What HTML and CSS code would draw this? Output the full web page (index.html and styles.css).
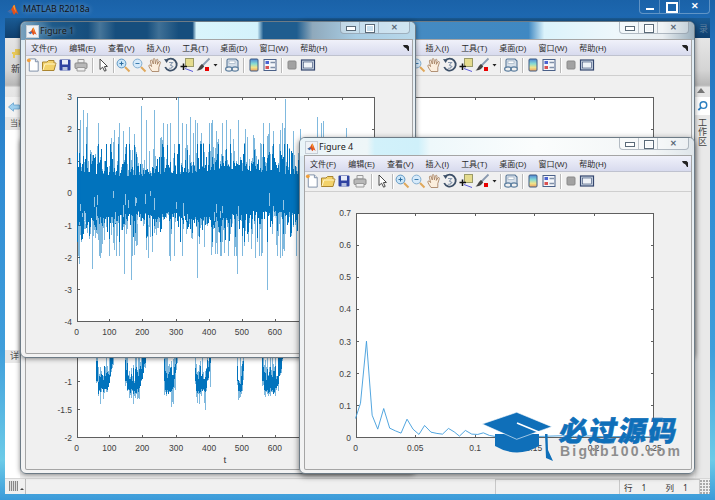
FILE: index.html
```html
<!DOCTYPE html>
<html lang="zh">
<head>
<meta charset="utf-8">
<title>MATLAB R2018a</title>
<link rel="stylesheet" href="styles.css">
</head>
<body>
<svg class="defs" aria-hidden="true">
  <defs>
    <linearGradient id="rainbow" x1="0" y1="0" x2="0" y2="1">
      <stop offset="0" stop-color="#4f86d8"/><stop offset=".4" stop-color="#86dcd4"/><stop offset=".7" stop-color="#f0e48a"/><stop offset="1" stop-color="#eea060"/>
    </linearGradient>
    <symbol id="i-new" viewBox="0 0 16 16"><path d="M3.5 1.5H10L13 4.5V14.5H3.5Z" fill="#fff" stroke="#7d8ea6"/><path d="M10 1.5V4.5H13" fill="#dfe6f0" stroke="#7d8ea6"/><circle cx="3" cy="3" r="2" fill="#ef9f3c"/></symbol>
    <symbol id="i-open" viewBox="0 0 16 16"><path d="M1.5 13.5V5H6L7.5 3.5H13V6H15L13 13.5Z" fill="#f3d26a" stroke="#aa8530"/><path d="M2 13L4 7H14.5" fill="none" stroke="#fff3c4"/></symbol>
    <symbol id="i-save" viewBox="0 0 16 16"><rect x="2.5" y="2.5" width="11" height="11" rx="1" fill="#2f42a0"/><rect x="5" y="3" width="6" height="4.5" fill="#e8ecf8"/><rect x="5.5" y="10" width="5" height="3.5" fill="#b8c2e0"/></symbol>
    <symbol id="i-print" viewBox="0 0 16 16"><path d="M5 2.5H11V6H5Z" fill="#eee" stroke="#9a9a9a"/><rect x="2" y="6" width="12" height="5.5" rx="1" fill="#b8b8b8" stroke="#8a8a8a"/><path d="M4 10.5H12V14H4Z" fill="#eee" stroke="#9a9a9a"/></symbol>
    <symbol id="i-cursor" viewBox="0 0 16 16"><path d="M5 2V12.5L7.6 10.2L9.6 14.2L11.2 13.4L9.4 9.6L12.4 9.4Z" fill="#fff" stroke="#333" stroke-width=".9"/></symbol>
    <symbol id="i-zin" viewBox="0 0 16 16"><path d="M10 10L14.5 14.5" stroke="#dfa85c" stroke-width="2"/><circle cx="6.5" cy="6.5" r="4.4" fill="#cbe6f8" stroke="#5f97c4"/><path d="M4.5 6.5H8.5M6.5 4.5V8.5" stroke="#2b6b9e"/></symbol>
    <symbol id="i-zout" viewBox="0 0 16 16"><path d="M10 10L14.5 14.5" stroke="#dfa85c" stroke-width="2"/><circle cx="6.5" cy="6.5" r="4.4" fill="#d6eafa" stroke="#82add0"/><path d="M4.5 6.5H8.5" stroke="#3d7dae"/></symbol>
    <symbol id="i-hand" viewBox="0 0 16 16"><path d="M5 14.5C3.8 12.5 1.6 9.8 1.8 8.6C2 7.6 3.6 8 4.6 9.6L3.4 4.2C3.2 2.9 4.8 2.6 5.2 3.8L6.3 7L6.2 2.6C6.2 1.2 7.9 1.2 8 2.6L8.4 6.8L9.4 3C9.8 1.8 11.2 2.2 11 3.5L10.3 7.4L11.9 4.9C12.6 4 13.8 4.7 13.3 5.8L11.8 10.5V14.5Z" fill="#fbeedd" stroke="#a07858" stroke-width=".8"/></symbol>
    <symbol id="i-rot" viewBox="0 0 16 16"><path d="M3 3.8A6 6 0 1 1 2.2 10" fill="none" stroke="#3d5068" stroke-width="1.8"/><path d="M1 2L5.8 2.4L3.6 6Z" fill="#3d5068"/><path d="M6 5.5H9.5L7.5 8L9.8 9.5L8 11.2H5.8" fill="none" stroke="#8a9bb0" stroke-width="1.1"/></symbol>
    <symbol id="i-tip" viewBox="0 0 16 16"><rect x="6.5" y="1.5" width="8" height="8" fill="#e5dc8e" stroke="#9a9a68"/><path d="M4.5 6.5V13M1.5 9.5H8" stroke="#111" stroke-width="1.5"/><path d="M6 11.5L14 14.5" stroke="#5a5ad8"/></symbol>
    <symbol id="i-brush" viewBox="0 0 16 16"><path d="M14.5 1.5L7.5 8.5" stroke="#8a9ab0" stroke-width="1.8"/><path d="M7 7L9.2 9.2C8 12 5 13.5 1.5 13.5C4 12 4 9 7 7Z" fill="#444"/><rect x="10" y="10" width="4" height="4" fill="#e80000"/></symbol>
    <symbol id="i-drop" viewBox="0 0 8 16"><path d="M2.5 7H6.5L4.5 9.5Z" fill="#222"/></symbol>
    <symbol id="i-link" viewBox="0 0 16 16"><path d="M3 11V3.5Q3 2 4.5 2H12L14 4V11" fill="#d7e0ea" stroke="#5a7898" stroke-width="1.1"/><rect x="5" y="4" width="6" height="2.6" fill="#fff" stroke="#8fa4b8" stroke-width=".6"/><ellipse cx="5" cy="12" rx="3.4" ry="2.2" fill="none" stroke="#5f80a0" stroke-width="1.2"/><ellipse cx="11" cy="12" rx="3.4" ry="2.2" fill="none" stroke="#5f80a0" stroke-width="1.2"/></symbol>
    <symbol id="i-cbar" viewBox="0 0 16 16"><rect x="4" y="2" width="8" height="12" rx="1" fill="url(#rainbow)" stroke="#3f5a82"/></symbol>
    <symbol id="i-leg" viewBox="0 0 16 16"><rect x="2" y="2.5" width="12" height="11" fill="#f4f6fa" stroke="#4a6088"/><rect x="3.5" y="4" width="3.5" height="3" fill="#4a62d0"/><rect x="3.5" y="9" width="3.5" height="3" fill="#d95050"/><path d="M8.5 5.5H13M8.5 10.5H13" stroke="#8090a8" stroke-width="1.3"/></symbol>
    <symbol id="i-hide" viewBox="0 0 16 16"><rect x="4" y="4" width="8" height="8" rx="1" fill="#a2a2a2" stroke="#8a8a8a"/></symbol>
    <symbol id="i-box" viewBox="0 0 16 16"><rect x="1.5" y="3" width="13" height="10" fill="#cbd6e4" stroke="#34466e" stroke-width="1.2"/><rect x="3.5" y="5" width="9" height="6" fill="#eef2f7" stroke="#34466e" stroke-width=".6"/></symbol>
    <symbol id="i-logo" viewBox="0 0 12 12"><path d="M0.5 7.5L4 5.5L6 2L7.5 0.8L11.5 10.5L9 8.5L7 11L5 7.8Z" fill="#e2501c"/><path d="M0.5 7.5L4 5.5L5.6 7.5L3.4 9.8Z" fill="#3d6fb0"/><path d="M6 2L7.5 0.8L9 8.5L7 5Z" fill="#f2a030"/></symbol>
  </defs>
</svg>

<template id="chrome">
  <nav class="menu">
    <span>文件(F)</span><span>编辑(E)</span><span>查看(V)</span><span>插入(I)</span><span>工具(T)</span><span>桌面(D)</span><span>窗口(W)</span><span>帮助(H)</span>
    <svg class="menu-arrow" viewBox="0 0 8 8"><path d="M1 1H5.5L7 2.5V7H6L4.5 4.5L2 3Z" fill="#222"/></svg>
  </nav>
  <div class="tools">
    <svg class="tool first"><use href="#i-new"/></svg>
    <svg class="tool"><use href="#i-open"/></svg>
    <svg class="tool"><use href="#i-save"/></svg>
    <svg class="tool"><use href="#i-print"/></svg>
    <i class="sep"></i>
    <svg class="tool"><use href="#i-cursor"/></svg>
    <i class="sep sep-b"></i>
    <svg class="tool"><use href="#i-zin"/></svg>
    <svg class="tool"><use href="#i-zout"/></svg>
    <svg class="tool"><use href="#i-hand"/></svg>
    <svg class="tool"><use href="#i-rot"/></svg>
    <svg class="tool"><use href="#i-tip"/></svg>
    <svg class="tool"><use href="#i-brush"/></svg>
    <svg class="tool narrow"><use href="#i-drop"/></svg>
    <i class="sep sep-c"></i>
    <svg class="tool"><use href="#i-link"/></svg>
    <i class="sep"></i>
    <svg class="tool"><use href="#i-cbar"/></svg>
    <svg class="tool"><use href="#i-leg"/></svg>
    <i class="sep"></i>
    <svg class="tool"><use href="#i-hide"/></svg>
    <svg class="tool"><use href="#i-box"/></svg>
  </div>
</template>

<div class="app">
  <header class="app-title">
    <svg class="app-logo"><use href="#i-logo"/></svg>
    <span class="app-name">MATLAB R2018a</span>
    <div class="app-btns">
      <span class="btn-min"></span>
      <span class="btn-max"></span>
      <span class="btn-close">&#x2715;</span>
    </div>
  </header>
  <div class="client">
    <div class="tabs"><span class="tabs-end">录</span></div>
    <div class="ribbon">
      <div class="ribbon-new">
        <svg class="plus" viewBox="0 0 8 10"><path d="M3 1H8V4H8V7H3V10H1V6H0V4H3Z" fill="#e8c95a"/></svg>
        <span>新</span>
      </div>
      <span class="collapse"></span>
    </div>
    <div class="work">
      <div class="left">
        <div class="nav">
          <svg class="back" viewBox="0 0 12 10"><path d="M0.5 5L5.5 0.8V3H11.5V7H5.5V9.2Z" fill="#9fd0ef" stroke="#5c9ccc" stroke-width=".7"/></svg>
        </div>
        <div class="path">当前</div>
        <div class="pane pane-top"></div>
        <div class="detail">详</div>
        <div class="pane"></div>
      </div>
      <div class="side">
        <svg class="find" viewBox="0 0 12 12"><circle cx="7" cy="5" r="3.6" fill="#fff" stroke="#2c7fc0" stroke-width="1.6"/><path d="M4.4 7.6L1.5 10.5" stroke="#2c7fc0" stroke-width="2"/></svg>
        <span class="side-tab">工作区</span>
      </div>
    </div>
    <footer class="status">
      <span class="grip"></span><span class="grip-arrow"></span>
      <span class="status-fill"></span>
      <span class="status-cell"></span>
      <span class="status-pos"><b>行</b><b>1</b><b class="pos-col">列</b><b>1</b></span>
      <span class="status-resize"></span>
    </footer>
  </div>
</div>

<section class="fig f3" data-plot="3"><div class="fig-title"><svg class="fig-icon"><use href="#i-logo"/></svg><span class="fig-name">Figure 3</span><div class="fig-btns"><span class="btn-min"></span><span class="btn-max"></span><span class="btn-close">&#x2715;</span></div></div><div class="fig-client"></div></section>
<section class="fig f2" data-plot="2"><div class="fig-title"><svg class="fig-icon"><use href="#i-logo"/></svg><span class="fig-name">Figure 2</span><div class="fig-btns"><span class="btn-min"></span><span class="btn-max"></span><span class="btn-close">&#x2715;</span></div></div><div class="fig-client"></div></section>
<section class="fig f1" data-plot="1"><div class="fig-title"><svg class="fig-icon"><use href="#i-logo"/></svg><span class="fig-name">Figure 1</span><div class="fig-btns"><span class="btn-min"></span><span class="btn-max"></span><span class="btn-close">&#x2715;</span></div></div><div class="fig-client"></div></section>
<section class="fig f4" data-plot="4"><div class="fig-title"><svg class="fig-icon"><use href="#i-logo"/></svg><span class="fig-name">Figure 4</span><div class="fig-btns"><span class="btn-min"></span><span class="btn-max"></span><span class="btn-close">&#x2715;</span></div></div><div class="fig-client"></div></section>

<div class="mark">
  <svg class="mark-cap" viewBox="0 0 72 50">
    <path d="M13 22V34Q35 47 57 34V22Z" fill="#0f6fb9"/>
    <path d="M0.3 12L34.7 0.3L69.7 14.7L34.7 27.3Z" fill="#0f6fb9" stroke="#fff" stroke-width=".6"/>
    <path d="M35 11L64 23" stroke="#fff" stroke-width="1.6"/>
    <path d="M63 22L64 46L71 49L66 38L65.5 22Z" fill="#0f6fb9"/>
  </svg>
  <div class="mark-text">
    <strong>必过源码</strong>
    <em>Bigdb100.com</em>
  </div>
</div>

<script src="script.js"></script>
</body>
</html>
```

FILE: styles.css
```css
* { box-sizing: border-box; }
html, body { margin: 0; width: 715px; height: 500px; overflow: hidden; }
body { position: relative; font-family: "Noto Sans", "Noto Sans CJK SC", sans-serif; color: #222; }
.defs { position: absolute; width: 0; height: 0; }

.app { width: 715px; height: 500px; display: flex; flex-direction: column; padding: 0 5px 6px;
  background: linear-gradient(180deg, #1a62a8 0, #2270bb 8%, #2f8bd3 35%, #3f9edb 70%, #6ccbe8 92%, #3b9ad9 100%); }
.app-title { height: 18px; display: flex; align-items: flex-start; margin: 0 0 0 -1px; }
.app-logo { width: 12px; height: 12px; margin: 4px 3px 0 3px; }
.app-name { font-size: 8.8px; line-height: 19px; color: #111; text-shadow: 0 0 5px rgba(255,255,255,.55); margin-left: 1px; }
.app-btns { margin-left: auto; margin-right: 0; width: 71px; height: 14px; display: flex; border: 1px solid rgba(255,255,255,.3); border-top: 0; border-radius: 0 0 4px 4px; color: #fff; }
.app-btns span { position: relative; display: block; border-right: 1px solid rgba(255,255,255,.25); height: 13px; font-size: 9px; line-height: 11px; text-align: center; font-weight: 700; }
.app-btns .btn-min { width: 20px; }
.app-btns .btn-max { width: 20px; }
.app-btns .btn-close { flex: 1; border-right: 0; }
.btn-min::before { content: ""; position: absolute; left: 6px; bottom: 3px; width: 8px; height: 2px; background: currentColor; }
.btn-max::before { content: ""; position: absolute; left: 6px; top: 2px; width: 8px; height: 7px; border: 2px solid currentColor; border-top-width: 2px; }

.client { flex: 1; min-height: 0; display: flex; flex-direction: column; background: #f0f0f0; }
.tabs { height: 20px; display: flex; justify-content: flex-end; align-items: center; padding-right: 2px; background: linear-gradient(180deg, #1a5b94, #0f3f6e); }
.tabs-end { color: #5d7f9e; font-size: 9px; }
.ribbon { height: 59px; display: flex; justify-content: space-between; background: linear-gradient(180deg, #e6e6e6 0, #d4d4d4 55%, #b7b7b7 80%, #e8e8e8 84%, #e4e4e4 100%); }
.ribbon-new { display: flex; flex-direction: column; align-items: flex-end; width: 15px; font-size: 9px; line-height: 11px; color: #333; padding-top: 10px; }
.plus { width: 8px; height: 10px; margin-bottom: 5px; }
.collapse { align-self: flex-end; margin: 0 5px 4px 0; width: 0; height: 0; border: 4px solid transparent; border-top: 0; border-bottom: 5px solid #777; }
.work { flex: 1; min-height: 0; display: flex; justify-content: space-between; background: #f0f0f0; }
.left { width: 15px; display: flex; flex-direction: column; }
.nav { height: 20px; display: flex; align-items: center; padding-left: 3px; background: #f2f2f2; }
.back { width: 12px; height: 10px; }
.path { height: 13px; font-size: 8px; line-height: 12px; padding-left: 5px; color: #444; background: #e6e6e6; white-space: nowrap; }
.pane { flex: 1; background: #fff; }
.pane-top { flex: none; height: 220px; }
.detail { height: 13px; font-size: 9px; line-height: 12px; padding-left: 5px; color: #555; background: #e8e8e8; }
.side { width: 15px; display: flex; flex-direction: column; align-items: center; background: #e9e9e9; }
.find { width: 15px; height: 18px; padding: 3px 2px; background: #fff; }
.side-tab { margin-top: 3px; writing-mode: vertical-rl; font-size: 9px; color: #444; line-height: 13px; letter-spacing: .5px; }
.status { height: 16px; display: flex; align-items: stretch; background: #f0f0f0; border-top: 1px solid #d6d6d6; }
.grip { width: 9px; margin: 2px 0 3px 4px; background: repeating-linear-gradient(90deg, #888 0 1px, #ddd 1px 2px); }
.grip-arrow { width: 0; height: 0; margin: 9px 1px 0 2px; border: 2px solid transparent; border-top: 0; border-bottom: 2px solid #444; }
.status-fill { flex: 1; border-left: 1px solid #bbb; }
.status-cell { width: 125px; border: 1px solid #c8c8c8; border-bottom: 0; }
.status-pos { width: 80px; display: flex; align-items: center; gap: 9px; padding-left: 4px; border-top: 1px solid #c8c8c8; border-right: 1px solid #c8c8c8; font-size: 8.5px; color: #333; }
.status-pos b { font-weight: 400; }
.status-pos .pos-col { margin-left: 10px; }
.status-resize { width: 10px; background: radial-gradient(circle at 1px 1px, #aaa 0 1px, transparent 1px) 0 4px / 3px 3px; }

.fig { position: absolute; width: 396px; height: 337px; padding: 0 3px 4px 5px; display: flex; flex-direction: column;
  border: 1px solid #6d7b86; border-radius: 6px; background: linear-gradient(180deg, #dcebf4, #eef1f3 40%, #f3f3f3); box-shadow: 0 1px 5px rgba(0,0,0,.45); }
.f1 { left: 20px; top: 21px; }
.f2 { left: 20px; top: 137px; }
.f3 { left: 299px; top: 21px; }
.f4 { left: 299px; top: 137px; box-shadow: 0 2px 6px rgba(0,0,0,.55); }
.fig-title { flex: none; height: 18px; margin: 0 -3px 0 -5px; padding: 0 5px; display: flex; align-items: flex-start; border-radius: 5px 5px 0 0; }
.f1 .fig-title { background: linear-gradient(90deg, #7ba2bd 0, #5d8fb2 3%, #1e5a8a 8%, #164e7d 17%, #47769a 20%, #164e7d 24%, #164e7d 32%, #3f7096 35%, #164e7d 40%, #164e7d 43.5%, #d9f5fc 44.5%, #d4f2fb 60%, #1f5d8f 61.5%, #1f5d8f 70%, #8fa9bc 74%, #a9cde4 85%, #b9d8ea 100%); }
.f3 .fig-title { background: linear-gradient(90deg, #4a8dc2 0, #3f88c2 58%, #dbf3fb 62%, #eef7fb 80%, #e9eef1 92%, #9cb0be 100%); }
.f4 .fig-title { background: linear-gradient(90deg, #e9f4f8 0, #eef6f8 17%, #d2f1fa 19%, #cff0fa 30%, #eef8fb 33%, #fbfdfd 60%, #f2f5f6 90%, #dfe6ea 100%); }
.fig-icon { width: 11px; height: 11px; margin: 4px 2px 0 1px; padding: 1px; background: #eef2f6; box-shadow: 0 0 0 1px #c6ced6; }
.fig-name { font-size: 9px; line-height: 18px; color: #1a1a1a; text-shadow: 0 0 4px rgba(255,255,255,.7); }
.fig-btns { margin-left: auto; width: 70px; height: 12px; display: flex; color: #5a6a78; border: 1px solid rgba(110,125,140,.5); border-top: 0; border-radius: 0 0 4px 4px; background: rgba(255,255,255,.35); }
.fig-btns span { position: relative; display: block; height: 11px; border-right: 1px solid rgba(110,125,140,.4); font-size: 8px; line-height: 10px; text-align: center; font-weight: 700; }
.fig-btns .btn-min { width: 19px; }
.fig-btns .btn-max { width: 19px; }
.fig-btns .btn-close { flex: 1; border-right: 0; }
.fig-btns .btn-min::before { left: 5px; bottom: 2px; width: 8px; height: 3px; background: #fff; border: 1px solid currentColor; }
.fig-btns .btn-max::before { left: 5px; top: 2px; width: 8px; height: 7px; border: 1px solid currentColor; box-shadow: inset 0 0 0 1px #fff; }

.fig-client { flex: 1; min-height: 0; display: flex; flex-direction: column; background: #f0f0f0; box-shadow: 0 0 0 1px #a5a5a5; border-radius: 0 0 1px 1px; overflow: hidden; }
.menu { flex: none; height: 16px; position: relative; display: flex; align-items: center; gap: 12px; padding-left: 5px; background: linear-gradient(180deg, #f0f1fa, #d8dbee); border-bottom: 1px solid #bfc2cf; font-size: 8px; color: #2a2a2a; white-space: nowrap; font-family: "Liberation Sans", "Noto Sans CJK SC", sans-serif; }
.menu-arrow { position: absolute; right: 2px; top: 4px; width: 8px; height: 8px; }
.tools { flex: none; height: 20px; display: flex; align-items: center; padding-bottom: 1px; background: #f0f0f0; border-bottom: 1px solid #cfcfcf; }
.tool { flex: none; width: 16px; height: 16px; }
.tool.first { width: 15px; }
.tool.narrow { width: 8px; }
.sep { flex: none; width: 1px; height: 15px; margin: 0 2px 0 3px; background: #b9b9b9; box-shadow: 1px 0 0 #fff; }
.sep-b { margin: 0 1px 0 2px; }
.sep-c { margin: 0 2px; }
.plot { flex: 1; display: block; min-height: 0; width: 386px; font-family: "Liberation Sans", sans-serif; }
.plot text { font-size: 8.5px; fill: #404040; }
.plot .xlabel { font-size: 10px; }
.frame { fill: #fff; stroke: #5e5e5e; stroke-width: 1; shape-rendering: crispEdges; }
.ticks { stroke: #5e5e5e; stroke-width: 1; shape-rendering: crispEdges; fill: none; }
.core { fill: none; stroke: #0072bd; stroke-width: 1; shape-rendering: crispEdges; }
.light { fill: none; stroke: #0072bd; stroke-opacity: .5; stroke-width: 1; shape-rendering: crispEdges; }
.speck { fill: none; stroke: #fff; stroke-opacity: .6; stroke-width: 1; shape-rendering: crispEdges; }
.spec { fill: none; stroke: #3f9bdb; stroke-width: .9; }

.mark { position: absolute; left: 482px; top: 412px; display: flex; }
.mark-cap { width: 72px; height: 50px; }
.mark-text { margin: 2px 0 0 6px; display: flex; flex-direction: column; align-items: flex-start; }
.mark-text strong { font: 900 28px/30px "Noto Sans CJK SC", sans-serif; color: #0f6fb9; transform: skewX(-10deg); letter-spacing: 1.7px; white-space: nowrap; -webkit-text-stroke: .6px #0f6fb9; }
.mark-text em { font: 700 14px/14px "Liberation Sans", sans-serif; color: #8d8d8d; letter-spacing: 2.2px; white-space: nowrap; }
```

FILE: script.js
```js
var NS = "http://www.w3.org/2000/svg";
var seed = 20180;
function rnd() { seed = (seed * 1664525 + 1013904223) % 4294967296; return seed / 4294967296; }
function mag() { return -Math.log(rnd() + 1e-6); }

function el(parent, name, attrs, txt) {
  var e = document.createElementNS(NS, name);
  for (var k in attrs) e.setAttribute(k, attrs[k]);
  if (txt !== undefined) e.textContent = txt;
  parent.appendChild(e);
  return e;
}

/* Axes box: left 50, right 349, top 21, bottom 246 inside each plot svg. */
var L = 50.5, R = 349.5, T = 21.5, B = 246.5;
function axes(svg, o) {
  el(svg, "rect", { x: L, y: T, width: R - L, height: B - T, "class": "frame" });
  var d = "", i, x, y;
  for (i = 0; i < o.xt.length; i++) {
    x = Math.round(L + i * o.dx - 0.5) + 0.5;
    d += "M" + x + " " + B + "v-3M" + x + " " + T + "v3";
    el(svg, "text", { x: x - 0.5, y: B + 13, "text-anchor": "middle" }, o.xt[i]);
  }
  for (i = 0; i < o.yt.length; i++) {
    y = Math.round(T + i * o.dy - 0.5) + 0.5;
    d += "M" + L + " " + y + "h3M" + R + " " + y + "h-3";
    el(svg, "text", { x: L - 5, y: y + 3, "text-anchor": "end" }, o.yt[i]);
  }
  el(svg, "path", { d: d, "class": "ticks" });
  if (o.xlabel) el(svg, "text", { x: 199, y: 272, "text-anchor": "middle", "class": "xlabel" }, o.xlabel);
}

function vy(v) { return (T + (3 - v) * 32.14).toFixed(1); }

function noise(svg) {
  var up = {}, down = {};
  [[76, 3], [83, 2.6], [79, 2.3], [87, 2.5], [119, 2.2], [141, 2.72], [146, 2.3], [154, 2.6], [178, 3], [190, 2.4], [195, 2.3], [209, 2.2], [212, 2.3], [226, 2.3], [238, 2.3], [245, 2.0], [285, 2.95], [293, 1.95], [300, 2.0], [317, 2.4], [321, 2.2], [323, 2.25], [346, 2.05]]
    .forEach(function (s) { up[s[0]] = s[1]; });
  [[78, -2.2], [92, -2.35], [124, -2.5], [131, -2.7], [197, -2.65], [237, -2.5], [267, -3.0], [100, -2.0], [148, -2.0], [170, -2.1], [215, -1.9], [255, -2.0], [280, -2.0]]
    .forEach(function (s) { down[s[0]] = s[1]; });
  var core = "", light = "", speck = "";
  for (var px = 76; px <= 349; px++) {
    var x = px - 25.5;
    var hi = 0.62 + 0.1 * Math.sin(px / 29) + mag() * 0.36;
    var lo = -0.62 + 0.1 * Math.sin(px / 19) - mag() * 0.34;
    hi = Math.min(hi, 1.55);
    lo = Math.max(lo, -1.5);
    var sHi = rnd() < 0.7 ? hi + mag() * 0.42 : hi;
    var sLo = rnd() < 0.7 ? lo - mag() * 0.42 : lo;
    sHi = Math.min(sHi, 2.2);
    sLo = Math.max(sLo, -1.95);
    if (px >= 298) { sHi = Math.min(sHi, 1.6); hi = Math.min(hi, 1.2); }
    if (up[px]) sHi = up[px];
    if (down[px]) sLo = down[px];
    core += "M" + x + " " + vy(hi) + "V" + vy(lo);
    light += "M" + x + " " + vy(sHi) + "V" + vy(hi) + "M" + x + " " + vy(lo) + "V" + vy(sLo);
    if (rnd() < 0.18) {
      var g = -0.85 + rnd() * 0.95;
      speck += "M" + x + " " + vy(g) + "V" + vy(g - 0.12 - rnd() * 0.35);
    }
  }
  el(svg, "path", { d: light, "class": "light" });
  el(svg, "path", { d: core, "class": "core" });
  el(svg, "path", { d: speck, "class": "speck" });
}

function by(v) { return (246 - (v + 2) * 56.25).toFixed(1); }
function bursts(svg) {
  var core = "", light = "";
  [[96, 113], [125, 146], [164, 177], [195, 211], [237, 244], [262, 283]].forEach(function (r) {
    for (var px = r[0]; px <= r[1]; px++) {
      var t = (px - r[0]) / (r[1] - r[0]);
      var lo = -1.13 + 2.6 * Math.pow(Math.max(0, t - 0.6), 1.5) - rnd() * 0.1;
      if (t < 0.06) lo = -1.0;
      var hi = lo + 0.12 + rnd() * 0.36;
      var top = hi + rnd() * rnd() * 0.7;
      if (t < 0.06 || t > 0.9) top = -0.3;
      var dip = lo - mag() * 0.09;
      var x = px - 25.5;
      core += "M" + x + " " + by(hi) + "V" + by(lo);
      light += "M" + x + " " + by(top) + "V" + by(hi) + "M" + x + " " + by(lo) + "V" + by(Math.max(dip, -1.52));
    }
  });
  el(svg, "path", { d: light, "class": "light" });
  el(svg, "path", { d: core, "class": "core" });
}

var T100 = ["0", "100", "200", "300", "400", "500", "600", "700", "800", "900"];
var plots = {
  1: function (s) {
    axes(s, { xt: T100, yt: ["3", "2", "1", "0", "-1", "-2", "-3", "-4"], dx: 33.2, dy: 32.14 });
    noise(s);
  },
  2: function (s) {
    axes(s, { xt: T100, yt: [], dx: 33.2, dy: 28.1, xlabel: "t" });
    ["-2", "-1.5", "-1"].forEach(function (label, i) {
      var y = B - i * 28.1;
      el(s, "text", { x: L - 5, y: y + 3, "text-anchor": "end" }, label);
      el(s, "path", { d: "M" + L + " " + Math.round(y - 0.5) + ".5h3", "class": "ticks" });
    });
    bursts(s);
  },
  3: function (s) {
    axes(s, { xt: ["", "", "", "", "", ""], yt: ["", "", "", "", "", "", "", ""], dx: 59.8, dy: 32.14 });
  },
  4: function (s) {
    axes(s, { xt: ["0", "0.05", "0.1", "0.15", "0.2", "0.25"], yt: ["0.7", "0.6", "0.5", "0.4", "0.3", "0.2", "0.1", "0"], dx: 59.8, dy: 32.14 });
    el(s, "polyline", { "class": "spec", points: "50,227.3 55,212 61,149.7 66.7,224 72.3,238 78.3,217.3 84.3,237 90,239.7 95.7,242 101.7,228 107.7,238 113.7,243.3 119.3,234.3 125.7,241 131.7,242.3 137.3,243 143.3,237.3 149,240.7 154.3,245 160.3,239.3 166.7,243 172.7,243.3 178.3,241.7 184.3,244.3 190,245.3 196,244.5 202,245 208,244 214,245 220,244.6 232,245.4 245,245 258,244.6 270,245.3 285,244.8 300,245.6 320,245.3 349,245.8" });
  }
};

var tpl = document.getElementById("chrome");
document.querySelectorAll(".fig").forEach(function (fig) {
  var c = fig.querySelector(".fig-client");
  c.appendChild(tpl.content.cloneNode(true));
  var svg = el(c, "svg", { "class": "plot", viewBox: "0 0 386 278", width: 386, height: 278 });
  plots[fig.dataset.plot](svg);
});
```
